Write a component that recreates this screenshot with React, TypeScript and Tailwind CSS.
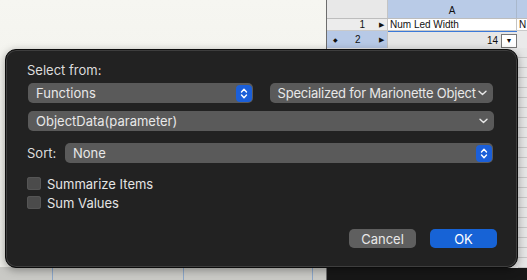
import React from "react";

const font = { fontFamily: "Inter, 'Liberation Sans', sans-serif" };

function Stepper() {
  return (
    <div className="flex h-[17px] w-[16px] items-center justify-center rounded-[4px] bg-[#1b5fd9]">
      <svg width="10" height="13" viewBox="0 0 10 13" fill="none">
        <path d="M2.5 5 L5 2.3 L7.5 5" stroke="white" strokeWidth="1.4" strokeLinecap="round" strokeLinejoin="round" />
        <path d="M2.5 8 L5 10.7 L7.5 8" stroke="white" strokeWidth="1.4" strokeLinecap="round" strokeLinejoin="round" />
      </svg>
    </div>
  );
}

function Chevron() {
  return (
    <svg width="9" height="6" viewBox="0 0 9 6" fill="none">
      <path d="M1 1.2 L4.5 4.6 L8 1.2" stroke="#e8e8e8" strokeWidth="1.4" strokeLinecap="round" strokeLinejoin="round" />
    </svg>
  );
}

function Checkbox({ label }: { label: string }) {
  return (
    <div className="flex h-[13px] items-center">
      <div className="h-[13px] w-[14px] rounded-[3px] bg-[#4b4b4b] shadow-[inset_0_0_0_1px_#555]" />
      <span className="ml-[6px] text-[13px] leading-[16px] text-[#e4e4e4]">{label}</span>
    </div>
  );
}

export default function App() {
  const rightRows = Array.from({ length: 22 });
  return (
    <div className="relative h-[280px] w-[527px] overflow-hidden bg-[#f4f4ef]" style={font}>
      {/* background window */}
      <div className="flex h-full w-full">
        <div className="flex h-full w-[326px] flex-col">
          <div className="flex-1 bg-gradient-to-b from-[#f6f6f1] to-[#ecece7]" />
          <div className="relative h-[13px] bg-[#c9c9c5]">
            <div className="absolute left-[52px] top-0 h-full w-px bg-[#8aa5c8]" />
            <div className="absolute left-[183px] top-0 h-full w-px bg-[#8aa5c8]" />
            <div className="absolute left-[312px] top-0 h-full w-px bg-[#8aa5c8]" />
          </div>
        </div>
        <div className="flex h-full flex-1 flex-col border-l border-[#6d6d6d] bg-[#e9e9e9]">
          {/* header row */}
          <div className="flex h-[19px] border-b border-[#bdbdbd]">
            <div className="w-[61px] border-r border-[#c4c4c4] bg-[#e8e8e8]" />
            <div className="flex w-[129px] items-end justify-center border-r border-[#a9b8cc] bg-[#b9cbe7] pb-[1px] text-[10px] leading-[12px] text-[#111]" style={{ fontFamily: "'Liberation Sans', sans-serif" }}>A</div>
            <div className="flex-1 bg-[#b9cbe7]" />
          </div>
          {/* row 1 */}
          <div className="flex h-[12px] border-b border-[#c9c9c9] text-[10px] leading-[12px] text-[#111]" style={{ fontFamily: "'Liberation Sans', sans-serif" }}>
            <div className="flex w-[61px] items-center justify-end border-r border-[#c4c4c4] bg-[#ececec] pr-[3px]">
              <span className="mr-[14px]">1</span>
              <span className="text-[7px]">▶</span>
            </div>
            <div className="w-[129px] border-r border-[#c4c4c4] bg-white pl-[2px]">Num Led Width</div>
            <div className="flex-1 bg-white pl-[2px]">N</div>
          </div>
          {/* row 2 */}
          <div className="flex h-[17px] text-[10px] leading-[12px] text-[#111]" style={{ fontFamily: "'Liberation Sans', sans-serif" }}>
            <div className="flex w-[61px] items-center border-r border-[#c4c4c4] bg-[#b7c9e6] pl-[6px] pr-[3px]">
              <span className="text-[6px]">◆</span>
              <span className="ml-[17px]">2</span>
              <span className="ml-auto text-[7px]">▶</span>
            </div>
            <div className="flex w-[129px] items-end justify-end border-t border-[#3b79d9] bg-[#e6e6e6]">
              <span className="mb-[1px] mr-[3px]">14</span>
              <div className="flex h-[14px] w-[16px] items-center justify-center border border-[#777] bg-white text-[7px]">▼</div>
            </div>
            <div className="flex-1 bg-[#eaeaea]" />
          </div>
          {/* rows visible to the right of the dialog */}
          <div className="flex flex-1 flex-col items-end">
            {rightRows.map((_, i) => (
              <div key={i} className="h-[10px] w-[9px] shrink-0 border-b border-[#c6c6c6] bg-[#e6e6e6]" />
            ))}
          </div>
          <div className="h-[12px] shrink-0 bg-[#171717]" />
        </div>
      </div>

      {/* dialog */}
      <div className="absolute left-[5px] top-[49px] h-[219px] w-[513px] rounded-[11px] border border-[#0c0c0c] bg-[#222222] shadow-[inset_0_0_0_1px_#3e3e3e,0_2px_8px_rgba(0,0,0,0.35)]">
        <div className="flex flex-col pl-[21px] pr-[24px] pt-[12px]">
          <div className="text-[13px] leading-[16px] text-[#dcdcdc]">Select from:</div>
          <div className="mt-[5px] flex gap-[17px] pl-px">
            <div className="flex h-[20px] w-[225px] items-center justify-between rounded-[5px] bg-[#5a5a5a] pl-[8px] pr-[1px]">
              <span className="text-[13px] leading-[16px] text-[#e8e8e8]">Functions</span>
              <Stepper />
            </div>
            <div className="flex h-[20px] w-[224px] items-center justify-between rounded-[5px] bg-[#5a5a5a] pl-[8px] pr-[6px]">
              <span className="text-[13px] leading-[16px] tracking-[-0.2px] text-[#e8e8e8]">Specialized for Marionette Object</span>
              <Chevron />
            </div>
          </div>
          <div className="ml-px mt-[8px] flex h-[20px] w-[466px] items-center justify-between rounded-[5px] bg-[#5a5a5a] pl-[8px] pr-[6px]">
            <span className="text-[13px] leading-[16px] text-[#e8e8e8]">ObjectData(parameter)</span>
            <Chevron />
          </div>
          <div className="mt-[12px] flex items-center">
            <span className="w-[38px] text-[13px] leading-[16px] text-[#dcdcdc]">Sort:</span>
            <div className="flex h-[20px] w-[429px] items-center justify-between rounded-[5px] bg-[#5a5a5a] pl-[8px] pr-[1px]">
              <span className="text-[13px] leading-[16px] text-[#e8e8e8]">None</span>
              <Stepper />
            </div>
          </div>
          <div className="mt-[14px] flex flex-col gap-[6px]">
            <Checkbox label="Summarize Items" />
            <Checkbox label="Sum Values" />
          </div>
          <div className="mt-[20px] flex justify-end gap-[14px]">
            <button className="h-[19px] w-[67px] rounded-[5px] bg-[#5f5f5f] text-[13px] leading-[16px] text-[#e8e8e8]">Cancel</button>
            <button className="mr-[-4px] h-[19px] w-[67px] rounded-[5px] bg-[#1763d6] text-[13px] leading-[16px] text-white">OK</button>
          </div>
        </div>
      </div>
    </div>
  );
}
